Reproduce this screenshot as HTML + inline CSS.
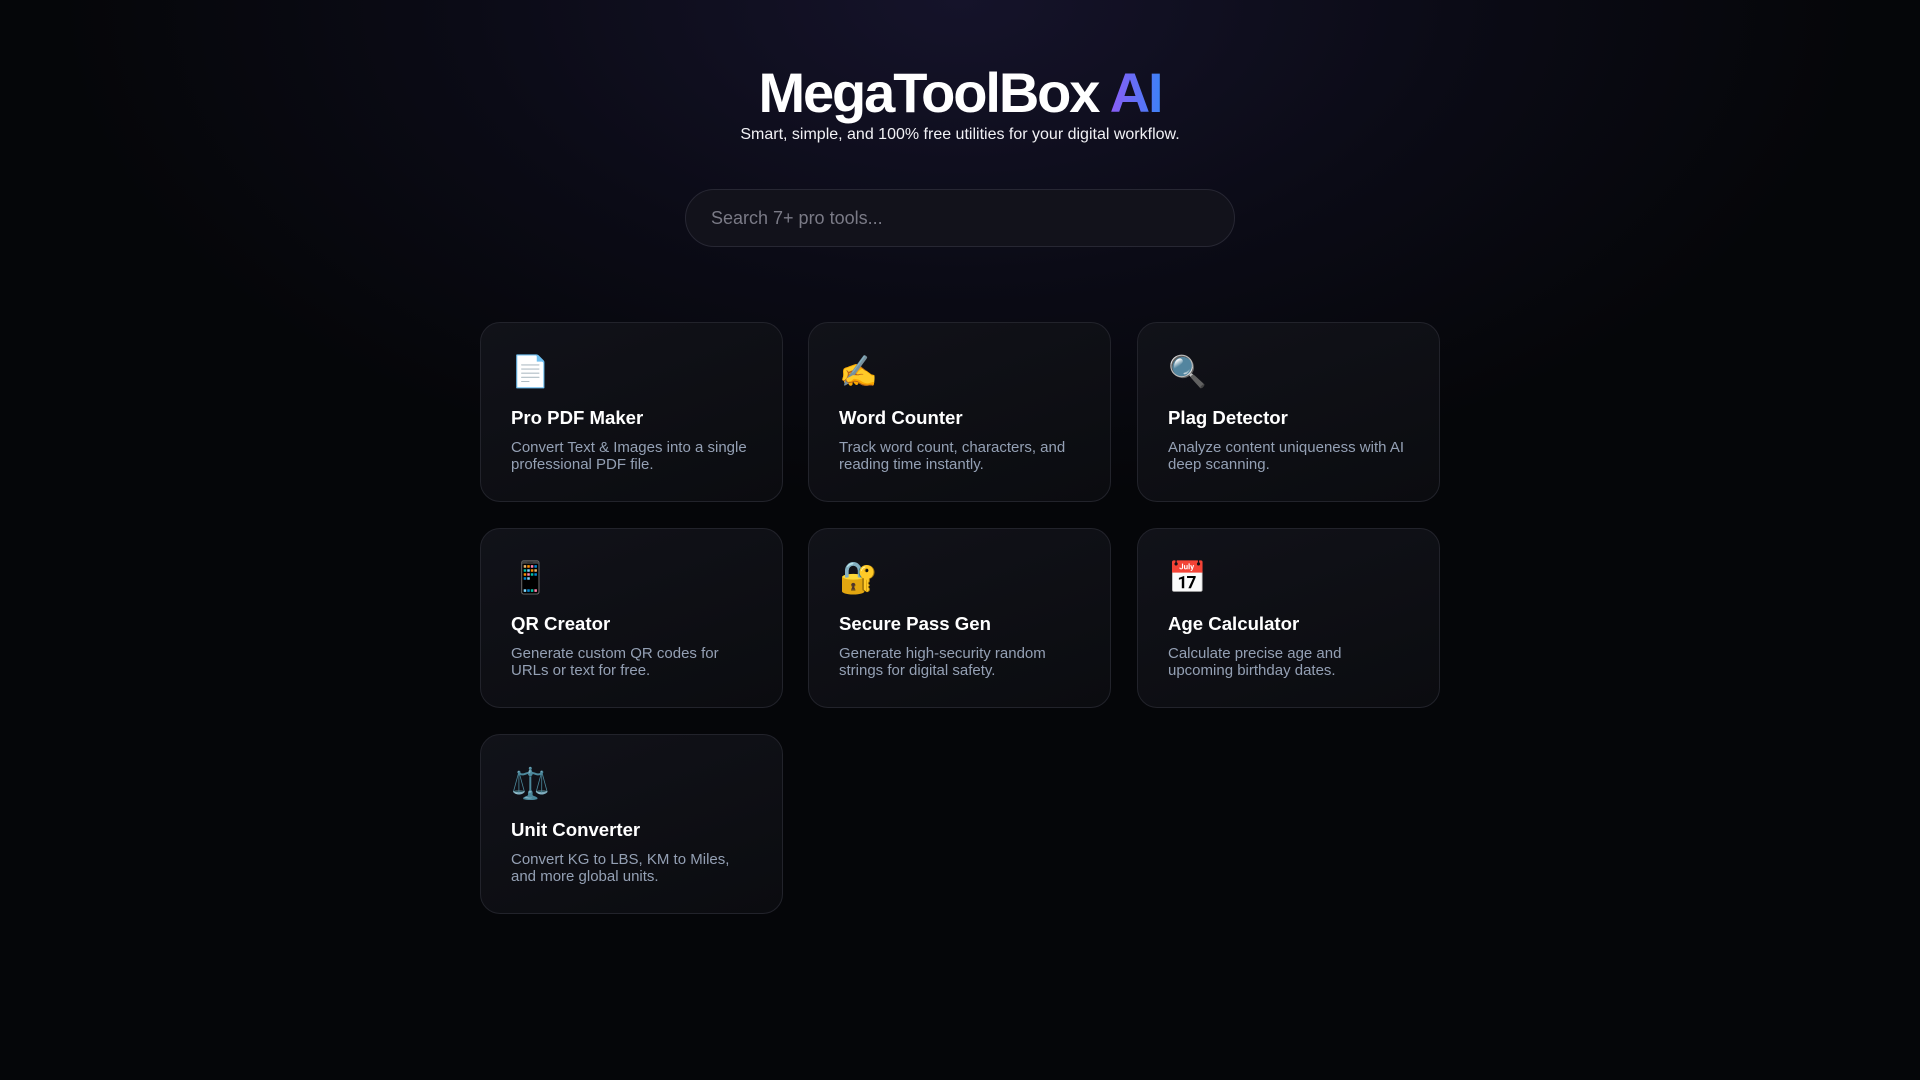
<!DOCTYPE html>
<html><head><meta charset="utf-8"><style>
*{box-sizing:border-box;margin:0;padding:0}
html,body{width:1920px;height:1080px;overflow:hidden}
body{background:radial-gradient(ellipse 900px 500px at 50% 0%,#15132a 0%,#0b0b16 55%,#050609 100%),#050609;font-family:"Liberation Sans",Arial,sans-serif;color:#fff}
h1{position:absolute;top:58px;left:0;width:1920px;text-align:center;font-size:56px;font-weight:700;letter-spacing:-2.1px;line-height:70px}
h1 span{background:linear-gradient(90deg,#8b5cf6,#3b82f6);-webkit-background-clip:text;background-clip:text;color:transparent}
.sub{position:absolute;top:126px;left:0;width:1920px;text-align:center;font-size:16px;color:#f1f1f5}
.search{position:absolute;left:685px;top:189px;width:550px;height:58px;border-radius:29px;background:#12121b;border:1px solid #272733;padding-left:25px;line-height:56px;font-size:18px;color:#7a7a86}
.card{position:absolute;width:303px;height:180px;border-radius:20px;background:linear-gradient(160deg,#111219,#0b0c10);border:1px solid #22232b;padding:29px 30px}
.ic{font-size:31px;line-height:40px;height:40px;font-family:"Noto Color Emoji",sans-serif}
.t{margin-top:14px;font-size:18.6px;font-weight:700;line-height:24px}
.d{margin-top:9px;font-size:15px;line-height:17px;color:#94a0b4}
</style></head><body>
<h1>MegaToolBox <span>AI</span></h1>
<div class="sub">Smart, simple, and 100% free utilities for your digital workflow.</div>
<div class="search">Search 7+ pro tools...</div>
<div class="card" style="left:480px;top:322px"><div class="ic">📄</div><div class="t">Pro PDF Maker</div><div class="d">Convert Text &amp; Images into a single professional PDF file.</div></div>
<div class="card" style="left:808px;top:322px"><div class="ic">✍️</div><div class="t">Word Counter</div><div class="d">Track word count, characters, and reading time instantly.</div></div>
<div class="card" style="left:1137px;top:322px"><div class="ic">🔍</div><div class="t">Plag Detector</div><div class="d">Analyze content uniqueness with AI deep scanning.</div></div>
<div class="card" style="left:480px;top:528px"><div class="ic">📱</div><div class="t">QR Creator</div><div class="d">Generate custom QR codes for URLs or text for free.</div></div>
<div class="card" style="left:808px;top:528px"><div class="ic">🔐</div><div class="t">Secure Pass Gen</div><div class="d">Generate high-security random strings for digital safety.</div></div>
<div class="card" style="left:1137px;top:528px"><div class="ic">📅</div><div class="t">Age Calculator</div><div class="d">Calculate precise age and upcoming birthday dates.</div></div>
<div class="card" style="left:480px;top:734px"><div class="ic">⚖️</div><div class="t">Unit Converter</div><div class="d">Convert KG to LBS, KM to Miles, and more global units.</div></div>
</body></html>
